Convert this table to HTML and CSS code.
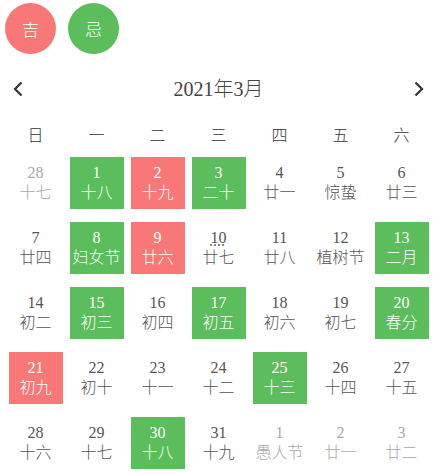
FILE: index.html
```html
<!DOCTYPE html>
<html lang="zh-CN">
<head>
<meta charset="utf-8">
<title>日历</title>
<link rel="stylesheet" href="styles.css">
</head>
<body>
<div class="marks">
  <div class="mark mark-good">吉</div>
  <div class="mark mark-bad">忌</div>
</div>
<div class="header">
  <svg class="arrow" width="10" height="16" viewBox="0 0 10 16"><path d="M8.5 1.5 L2 8 L8.5 14.5" fill="none" stroke="#333" stroke-width="2.2"/></svg>
  <div class="title">2021年3月</div>
  <svg class="arrow" width="10" height="16" viewBox="0 0 10 16"><path d="M1.5 1.5 L8 8 L1.5 14.5" fill="none" stroke="#333" stroke-width="2.2"/></svg>
</div>
<div class="weekdays">
  <div>日</div><div>一</div><div>二</div><div>三</div><div>四</div><div>五</div><div>六</div>
</div>
<div class="days">
  <div class="cell"><div class="box other"><span class="num">28</span><span class="lunar">十七</span></div></div>
  <div class="cell"><div class="box good"><span class="num">1</span><span class="lunar">十八</span></div></div>
  <div class="cell"><div class="box bad"><span class="num">2</span><span class="lunar">十九</span></div></div>
  <div class="cell"><div class="box good"><span class="num">3</span><span class="lunar">二十</span></div></div>
  <div class="cell"><div class="box"><span class="num">4</span><span class="lunar">廿一</span></div></div>
  <div class="cell"><div class="box"><span class="num">5</span><span class="lunar">惊蛰</span></div></div>
  <div class="cell"><div class="box"><span class="num">6</span><span class="lunar">廿三</span></div></div>

  <div class="cell"><div class="box"><span class="num">7</span><span class="lunar">廿四</span></div></div>
  <div class="cell"><div class="box good"><span class="num">8</span><span class="lunar">妇女节</span></div></div>
  <div class="cell"><div class="box bad"><span class="num">9</span><span class="lunar">廿六</span></div></div>
  <div class="cell"><div class="box today"><span class="num">10</span><span class="lunar">廿七</span></div></div>
  <div class="cell"><div class="box"><span class="num">11</span><span class="lunar">廿八</span></div></div>
  <div class="cell"><div class="box"><span class="num">12</span><span class="lunar">植树节</span></div></div>
  <div class="cell"><div class="box good"><span class="num">13</span><span class="lunar">二月</span></div></div>

  <div class="cell"><div class="box"><span class="num">14</span><span class="lunar">初二</span></div></div>
  <div class="cell"><div class="box good"><span class="num">15</span><span class="lunar">初三</span></div></div>
  <div class="cell"><div class="box"><span class="num">16</span><span class="lunar">初四</span></div></div>
  <div class="cell"><div class="box good"><span class="num">17</span><span class="lunar">初五</span></div></div>
  <div class="cell"><div class="box"><span class="num">18</span><span class="lunar">初六</span></div></div>
  <div class="cell"><div class="box"><span class="num">19</span><span class="lunar">初七</span></div></div>
  <div class="cell"><div class="box good"><span class="num">20</span><span class="lunar">春分</span></div></div>

  <div class="cell"><div class="box bad"><span class="num">21</span><span class="lunar">初九</span></div></div>
  <div class="cell"><div class="box"><span class="num">22</span><span class="lunar">初十</span></div></div>
  <div class="cell"><div class="box"><span class="num">23</span><span class="lunar">十一</span></div></div>
  <div class="cell"><div class="box"><span class="num">24</span><span class="lunar">十二</span></div></div>
  <div class="cell"><div class="box good"><span class="num">25</span><span class="lunar">十三</span></div></div>
  <div class="cell"><div class="box"><span class="num">26</span><span class="lunar">十四</span></div></div>
  <div class="cell"><div class="box"><span class="num">27</span><span class="lunar">十五</span></div></div>

  <div class="cell"><div class="box"><span class="num">28</span><span class="lunar">十六</span></div></div>
  <div class="cell"><div class="box"><span class="num">29</span><span class="lunar">十七</span></div></div>
  <div class="cell"><div class="box good"><span class="num">30</span><span class="lunar">十八</span></div></div>
  <div class="cell"><div class="box"><span class="num">31</span><span class="lunar">十九</span></div></div>
  <div class="cell"><div class="box other"><span class="num">1</span><span class="lunar">愚人节</span></div></div>
  <div class="cell"><div class="box other"><span class="num">2</span><span class="lunar">廿一</span></div></div>
  <div class="cell"><div class="box other"><span class="num">3</span><span class="lunar">廿二</span></div></div>
</div>
</body>
</html>
```

FILE: styles.css
```css
html, body {
  margin: 0;
  padding: 0;
  background: #fff;
}
body {
  font-family: "Liberation Serif", "Noto Sans CJK SC", serif;
  font-weight: 300;
  color: #555;
  width: 437px;
  height: 474px;
  overflow: hidden;
}
.marks {
  display: flex;
  gap: 12px;
  padding: 3px 0 0 5px;
  height: 51px;
}
.mark {
  width: 51px;
  height: 51px;
  border-radius: 50%;
  color: #fff;
  font-size: 17px;
  display: flex;
  align-items: center;
  justify-content: center;
}
.mark-good { background: #f87878; }
.mark-bad { background: #5bbd5b; }

.header {
  margin-top: 14px;
  height: 42px;
  padding: 0 13px 0 13px;
  display: flex;
  align-items: center;
  justify-content: space-between;
}
.arrow { display: block; }
.title {
  font-size: 20px;
  color: #444;
  line-height: 24px;
}

.weekdays {
  display: grid;
  grid-template-columns: repeat(7, 1fr);
  padding: 16px 5px 4px 5px;
  line-height: 20px;
  font-size: 16px;
  text-align: center;
  color: #333;
}

.days {
  display: grid;
  grid-template-columns: repeat(7, 1fr);
  grid-auto-rows: 65px;
  padding: 0 5px;
}
.cell {
  display: flex;
  align-items: center;
  justify-content: center;
}
.box {
  width: 54px;
  height: 52px;
  display: flex;
  flex-direction: column;
  align-items: center;
  justify-content: center;
  color: #555;
  font-size: 16px;
  line-height: 20px;
}
.box .num { display: block; }
.box .lunar { display: block; font-size: 16px; white-space: nowrap; }
.box.good { background: #5bbd5b; color: #fff; }
.box.bad { background: #f87878; color: #fff; }
.box.other { color: #a8a8a8; }
.box.today .num {
  text-decoration: underline dotted #666;
  text-underline-offset: 2px;
}
```
